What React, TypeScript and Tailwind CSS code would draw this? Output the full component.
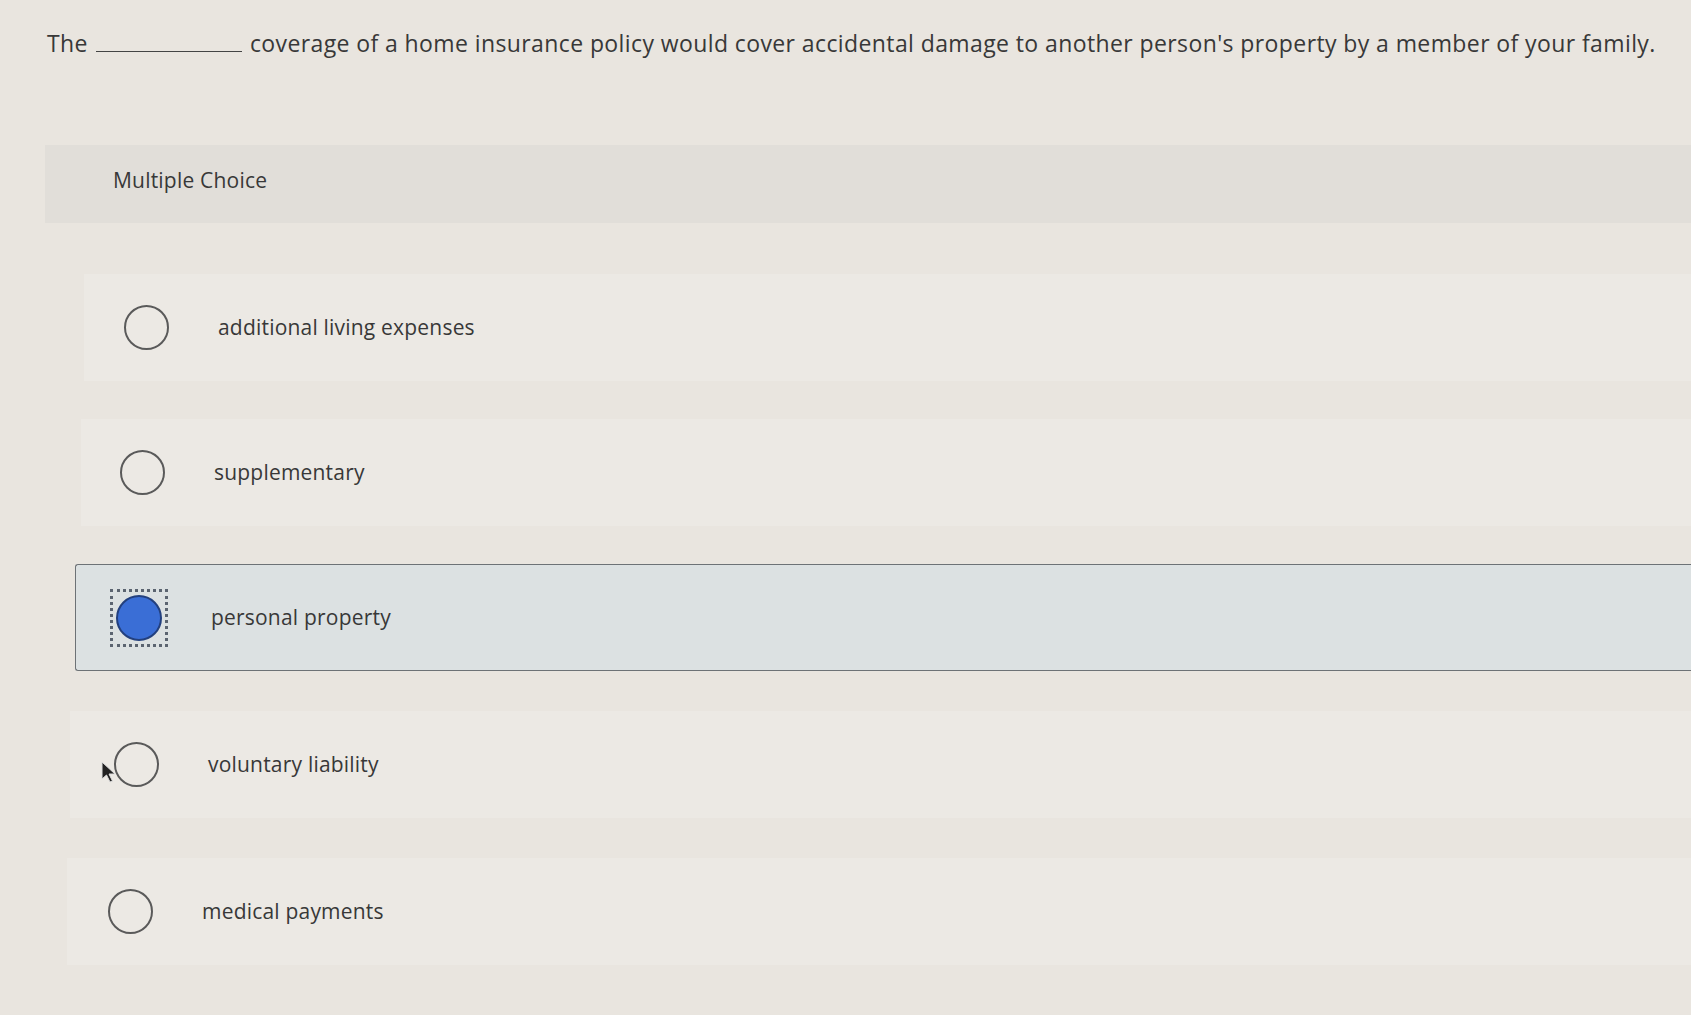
import React from 'react';

type Option = { label: string; selected?: boolean; ml: string; pl: string; mt: string };

const options: Option[] = [
  { label: 'additional living expenses', ml: 'ml-[84px]', pl: 'pl-[33px]', mt: 'mt-[51px]' },
  { label: 'supplementary', ml: 'ml-[81px]', pl: 'pl-[32px]', mt: 'mt-[38px]' },
  { label: 'personal property', selected: true, ml: 'ml-[75px]', pl: 'pl-[34px]', mt: 'mt-[38px]' },
  { label: 'voluntary liability', ml: 'ml-[70px]', pl: 'pl-[37px]', mt: 'mt-[40px]' },
  { label: 'medical payments', ml: 'ml-[67px]', pl: 'pl-[34px]', mt: 'mt-[40px]' },
];

const Radio: React.FC<{ selected?: boolean }> = ({ selected }) => {
  if (selected) {
    return (
      <div className="flex size-[58px] items-center justify-center border-[3px] border-dotted border-[#5b6470]">
        <div className="size-[46px] rounded-full border-2 border-[#23407e] bg-[#3a6ed6]" />
      </div>
    );
  }
  return (
    <div className="flex size-[58px] items-center justify-center">
      <div className="size-[45px] rounded-full border-2 border-[#5a5a5a]" />
    </div>
  );
};

export default function App() {
  return (
    <div
      className="relative h-[1015px] w-full overflow-hidden bg-[#e9e5df] text-[#383838]"
      style={{ fontFamily: '"Open Sans", Lato, sans-serif' }}
    >
      {/* question */}
      <div className="flex items-end pl-[47px] pt-[27px] text-[23px] leading-[32px] tracking-[0.4px]">
        <span>The</span>
        <span className="mb-[7px] ml-[8px] mr-[8px] inline-block w-[146px] border-b-[1.5px] border-[#444]" />
        <span>
          coverage of a home insurance policy would cover accidental damage to another person's property by a
          member of your family.
        </span>
      </div>

      {/* header band */}
      <div className="ml-[45px] mt-[86px] flex h-[78px] items-center bg-[#e1ded9] pb-[6px] pl-[68px] text-[21px] tracking-[0.2px]">
        Multiple Choice
      </div>

      {/* options */}
      <div className="flex flex-col">
        {options.map((o) => (
          <div
            key={o.label}
            className={`${o.mt} ${o.ml} flex h-[107px] items-center ${o.pl} text-[21px] tracking-[0.2px] ${
              o.selected
                ? 'rounded-l-[3px] border border-r-0 border-[#6d7276] bg-[#dce1e2]'
                : 'bg-[#ece9e4]'
            }`}
          >
            <Radio selected={o.selected} />
            <span className="ml-[43px]">{o.label}</span>
          </div>
        ))}
      </div>

      {/* mouse cursor */}
      <svg className="absolute left-[100px] top-[760px]" width="18" height="24" viewBox="0 0 18 24">
        <path d="M2 2 L2 19 L6.5 15 L10 22 L12.5 21 L9 14 L15 14 Z" fill="#222" stroke="#ddd" strokeWidth="1" />
      </svg>
    </div>
  );
}
